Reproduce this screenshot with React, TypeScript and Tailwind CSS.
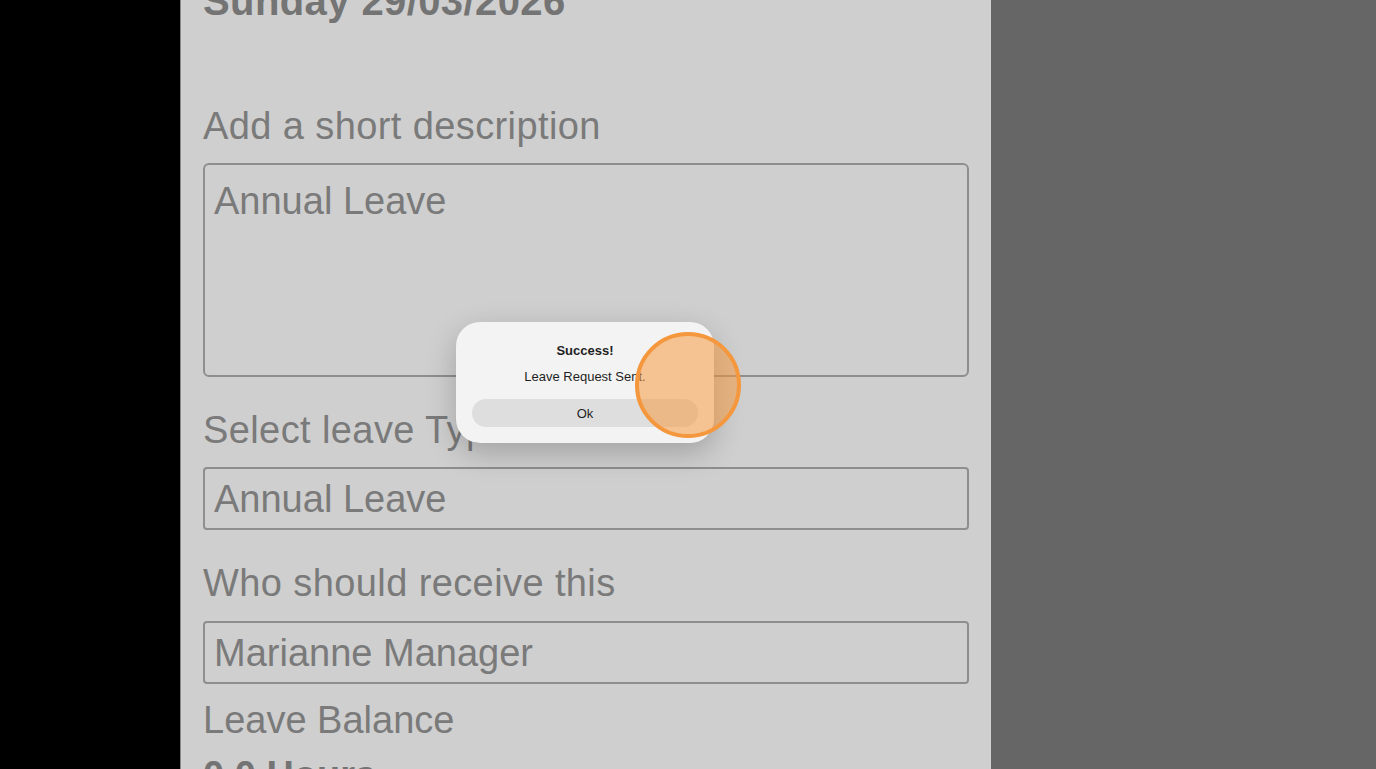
export default function App() {
  return (
    <div
      className="relative flex h-[769px] w-full overflow-hidden"
      style={{ fontFamily: '"Liberation Sans", Arial, sans-serif' }}
    >
      <div className="w-[180px] shrink-0 bg-black" />

      {/* form panel, dimmed behind the alert */}
      <div className="w-[811px] shrink-0 overflow-hidden border-l border-[#8a8a8a] bg-[#cfcfcf] pl-[22px] pr-[22px] text-[38px] leading-none text-[#7a7a7a]">
        <h1 className="mt-[-19px] text-[40px] font-bold tracking-[0.4px] text-[#747474]">Sunday 29/03/2026</h1>

        <p className="mt-[86px] tracking-[0.4px]">Add a short description</p>
        <div className="mt-[18px] h-[214px] rounded-[6px] border-2 border-[#8e8e8e] px-[9px] pt-[17px]">
          Annual Leave
        </div>

        <p className="mt-[34px] tracking-[0.4px]">Select leave Type</p>
        <div className="mt-[18px] flex h-[63px] items-center rounded-[4px] border-2 border-[#8e8e8e] px-[9px]">
          Annual Leave
        </div>

        <p className="mt-[34px] tracking-[0.4px]">Who should receive this</p>
        <div className="mt-[19px] flex h-[63px] items-center rounded-[4px] border-2 border-[#8e8e8e] px-[9px]">
          Marianne Manager
        </div>

        <p className="mt-[17px]">Leave Balance</p>
        <p className="mt-[17px] font-bold text-[#747474]">0.0 Hours</p>
      </div>

      <div className="flex-1 bg-[#666666]" />

      {/* alert */}
      <div className="absolute left-[456px] top-[322px] flex h-[121px] w-[258px] flex-col items-center rounded-[24px] bg-[#f3f3f3] px-[16px] pt-[22px] text-[13px] leading-none text-[#1f1f1f] shadow-[0_10px_30px_rgba(0,0,0,0.22)]">
        <p className="font-bold">Success!</p>
        <p className="mt-[13px]">Leave Request Sent.</p>
        <button className="mt-[16px] flex h-[28px] w-full shrink-0 items-center justify-center rounded-full bg-[#dedede] text-[13px] text-[#1f1f1f]">
          Ok
        </button>
      </div>

      {/* click highlight */}
      <div className="absolute left-[635px] top-[332px] h-[106px] w-[106px] rounded-full border-4 border-[#f5973c] bg-[#f5993f]/55" />
    </div>
  );
}
